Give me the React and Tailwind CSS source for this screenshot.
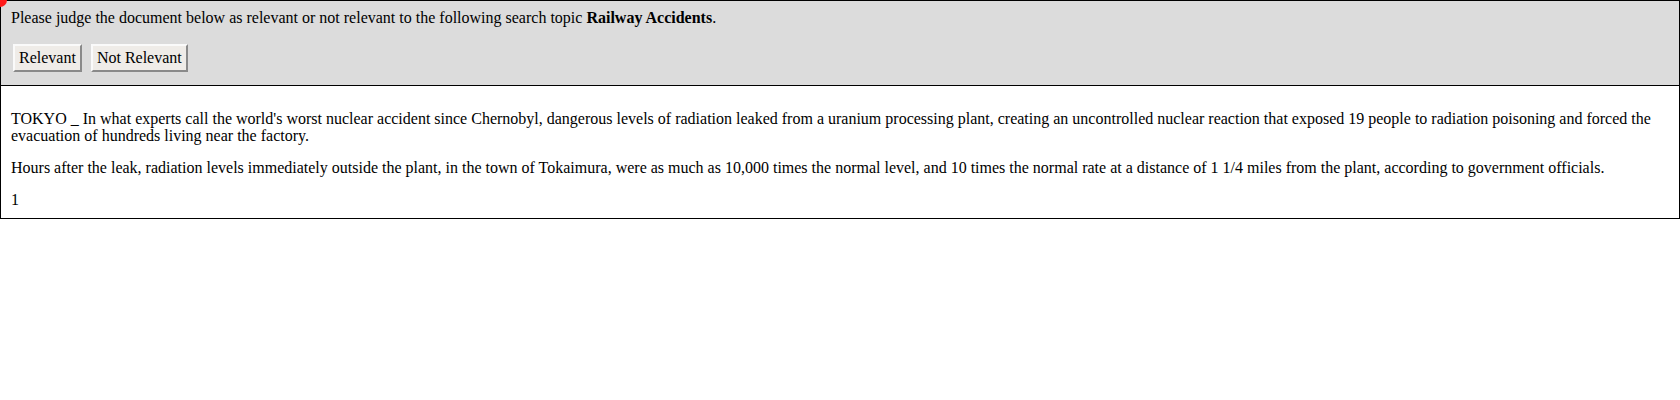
import React from 'react';

const Button = ({ children }) => (
  <button className="px-[4px] h-[28px] bg-[#efece8] text-black text-[16px] border-2 border-t-[#fafafa] border-l-[#fafafa] border-b-[#8a8a8a] border-r-[#8a8a8a] leading-none">
    {children}
  </button>
);

export default function App() {
  return (
    <div className="relative bg-white min-h-[400px] text-black text-[16px] font-['Liberation_Serif','Times_New_Roman',serif]">
      {/* red corner dot */}
      <div className="absolute -left-[7px] -top-[7px] w-[14px] h-[14px] rounded-full bg-[#ff1a1a]" />

      {/* --- Judge header --- */}
      <div className="bg-[#dcdcdc] border border-black px-[10px] pt-[8px] pb-[13px]">
        <p className="leading-[18px]">
          Please judge the document below as relevant or not relevant to the following search topic{' '}
          <b>Railway Accidents</b>.
        </p>
        <div className="flex gap-[9px] mt-[17px] ml-[2px]">
          <Button>Relevant</Button>
          <Button>Not Relevant</Button>
        </div>
      </div>

      {/* --- Document --- */}
      <div className="border border-t-0 border-black px-[10px] pt-[8px] pb-[10px] leading-[17px]">
        <p className="mt-[16px]">
          TOKYO _ In what experts call the world's worst nuclear accident since Chernobyl, dangerous levels of radiation leaked from a uranium processing plant, creating an uncontrolled nuclear reaction that exposed 19 people to radiation poisoning and forced the evacuation of hundreds living near the factory.
        </p>
        <p className="mt-[15px]">
          Hours after the leak, radiation levels immediately outside the plant, in the town of Tokaimura, were as much as 10,000 times the normal level, and 10 times the normal rate at a distance of 1 1/4 miles from the plant, according to government officials.
        </p>
        <p className="mt-[15px]">1</p>
      </div>
    </div>
  );
}
